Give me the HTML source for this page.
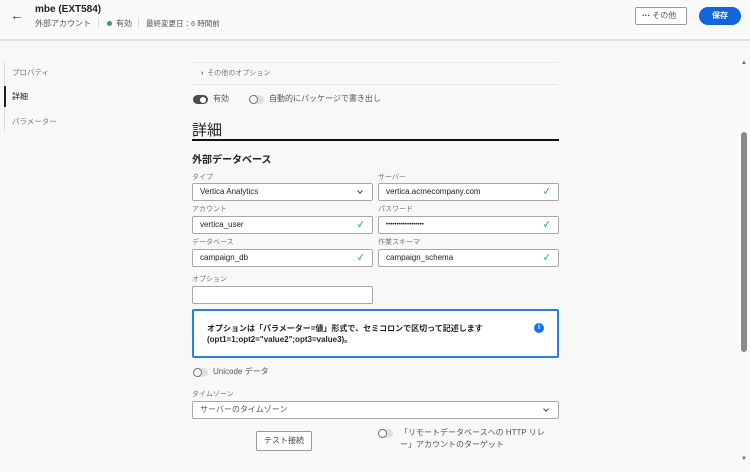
<!DOCTYPE html><html><head><meta charset="utf-8"><style>
*{box-sizing:border-box;margin:0;padding:0}
body{width:750px;height:472px;overflow:hidden;background:#f8f8f8;font-family:"Liberation Sans","Noto Sans CJK JP",sans-serif;position:relative;color:#2c2c2c}
.a{position:absolute;white-space:nowrap}
.lbl{font-size:7px;color:#777}
.inp{position:absolute;height:18px;border:1px solid #a8a8a8;background:#fff;border-radius:2px;font-size:8px;padding-left:7px;line-height:16px;color:#222}
.ck{position:absolute;right:9px;top:0;color:#2d9d78;font-size:7.5px;font-weight:bold}
.chev{position:absolute;right:10px;top:5px;width:4px;height:4px;border-right:1.5px solid #444;border-bottom:1.5px solid #444;transform:rotate(45deg)}
.tg{position:absolute;width:15px;height:9px;border-radius:5px;background:#e0e0e0}
.tg i{position:absolute;left:0;top:0;width:9px;height:9px;border-radius:50%;background:#fff;border:1.5px solid #6e6e6e}
.tg.on{background:#4b4b4b}
.tg.on i{left:7px;top:1.5px;width:6px;height:6px;border:none}
</style></head><body>
<div class="a" style="left:0;top:0;width:750px;height:39px;background:#fafafa"></div>
<div class="a" style="left:0;top:39px;width:750px;height:2px;background:#e1e1e1"></div>
<div class="a" style="left:10px;top:7px;font-size:14px;color:#444">←</div>
<div class="a" style="left:35px;top:4px;font-size:10px;font-weight:bold;color:#222">mbe (EXT584)</div>
<div class="a" style="left:35px;top:18px;font-size:8px;color:#555">外部アカウント</div>
<div class="a" style="left:98px;top:18px;width:1px;height:11px;background:#ddd"></div>
<div class="a" style="left:107px;top:21px;width:5px;height:5px;border-radius:50%;background:#2d9d78"></div>
<div class="a" style="left:116px;top:18px;font-size:8px;color:#555">有効</div>
<div class="a" style="left:138px;top:18px;width:1px;height:11px;background:#ddd"></div>
<div class="a" style="left:146px;top:18px;font-size:7.5px;color:#555">最終変更日：6 時間前</div>
<div class="a" style="left:635px;top:7px;width:52px;height:18px;border:1px solid #999;border-radius:2px;background:#fff;font-size:8px;line-height:16px;padding-left:6px;color:#555"><b style="color:#333">···</b> その他</div>
<div class="a" style="left:699px;top:7px;width:42px;height:18px;border-radius:9px;background:#1066d9;color:#fff;font-size:8px;font-weight:bold;line-height:18px;text-align:center">保存</div>
<div class="a" style="left:4px;top:62px;width:1px;height:70px;background:#ddd"></div>
<div class="a" style="left:4px;top:86px;width:2px;height:21px;background:#222"></div>
<div class="a lbl" style="left:12px;top:67px;font-size:7.5px">プロパティ</div>
<div class="a" style="left:12px;top:91px;font-size:8px;color:#222">詳細</div>
<div class="a lbl" style="left:12px;top:116px;font-size:7.5px">パラメーター</div>
<div class="a" style="left:192px;top:62px;width:366px;height:1px;background:#e6e6e6"></div>
<div class="a" style="left:192px;top:84px;width:366px;height:1px;background:#e6e6e6"></div>
<div class="a" style="left:201px;top:68px;font-size:7px;color:#777"><b style="color:#555">›</b>&nbsp;&nbsp;その他のオプション</div>
<div class="tg on a" style="left:193px;top:95px"><i></i></div>
<div class="a" style="left:213px;top:93px;font-size:8px;color:#555">有効</div>
<div class="tg a" style="left:249px;top:95px"><i></i></div>
<div class="a" style="left:269px;top:93px;font-size:8px;color:#555">自動的にパッケージで書き出し</div>
<div class="a" style="left:192px;top:119px;font-size:15px;color:#222">詳細</div>
<div class="a" style="left:192px;top:139px;width:367px;height:2px;background:#111"></div>
<div class="a" style="left:192px;top:151px;font-size:10px;font-weight:bold;color:#222">外部データベース</div>
<div class="a lbl" style="left:192px;top:172px">タイプ</div>
<div class="a lbl" style="left:378px;top:172px">サーバー</div>
<div class="inp" style="left:192px;top:183px;width:181px">Vertica Analytics<span class="chev"></span></div>
<div class="inp" style="left:378px;top:183px;width:181px">vertica.acmecompany.com<span class="ck">✓</span></div>
<div class="a lbl" style="left:192px;top:204px">アカウント</div>
<div class="a lbl" style="left:378px;top:204px">パスワード</div>
<div class="inp" style="left:192px;top:216px;width:181px">vertica_user<span class="ck">✓</span></div>
<div class="inp" style="left:378px;top:216px;width:181px;font-size:6px">••••••••••••••••••<span class="ck">✓</span></div>
<div class="a lbl" style="left:192px;top:237px">データベース</div>
<div class="a lbl" style="left:378px;top:237px">作業スキーマ</div>
<div class="inp" style="left:192px;top:249px;width:181px">campaign_db<span class="ck">✓</span></div>
<div class="inp" style="left:378px;top:249px;width:181px">campaign_schema<span class="ck">✓</span></div>
<div class="a lbl" style="left:192px;top:274px">オプション</div>
<div class="inp" style="left:192px;top:286px;width:181px"></div>
<div class="a" style="left:192px;top:309px;width:367px;height:49px;border:2px solid #2680eb;background:#fff;border-radius:2px"></div>
<div class="a" style="left:207px;top:323px;font-size:8px;font-weight:bold;color:#222;line-height:11px">オプションは「パラメーター=値」形式で、セミコロンで区切って記述します<br>(opt1=1;opt2="value2";opt3=value3)。</div>
<div class="a" style="left:534px;top:323px;width:10px;height:10px;border-radius:50%;background:#1473e6;color:#fff;font-size:7px;font-weight:bold;text-align:center;line-height:10px">i</div>
<div class="tg a" style="left:193px;top:368px"><i></i></div>
<div class="a" style="left:213px;top:366px;font-size:8px;color:#555">Unicode データ</div>
<div class="a lbl" style="left:192px;top:389px">タイムゾーン</div>
<div class="inp" style="left:192px;top:401px;width:367px;color:#555">サーバーのタイムゾーン<span class="chev"></span></div>
<div class="a" style="left:256px;top:431px;width:56px;height:20px;border:1px solid #999;border-radius:2px;background:#fff;font-size:8px;line-height:18px;text-align:center;color:#444">テスト接続</div>
<div class="tg a" style="left:378px;top:429px"><i></i></div>
<div class="a" style="left:400px;top:427px;font-size:8px;color:#555;line-height:12px">「リモートデータベースへの HTTP リレ<br>ー」アカウントのターゲット</div>
<div class="a" style="left:738px;top:56px;width:12px;height:405px;background:#fafafa"></div>
<div class="a" style="left:741px;top:60px;font-size:6px;color:#666">▲</div>
<div class="a" style="left:741px;top:132px;width:6px;height:220px;border-radius:3px;background:#8a8a8a"></div>
<div class="a" style="left:741px;top:456px;font-size:6px;color:#666">▼</div>
</body></html>
